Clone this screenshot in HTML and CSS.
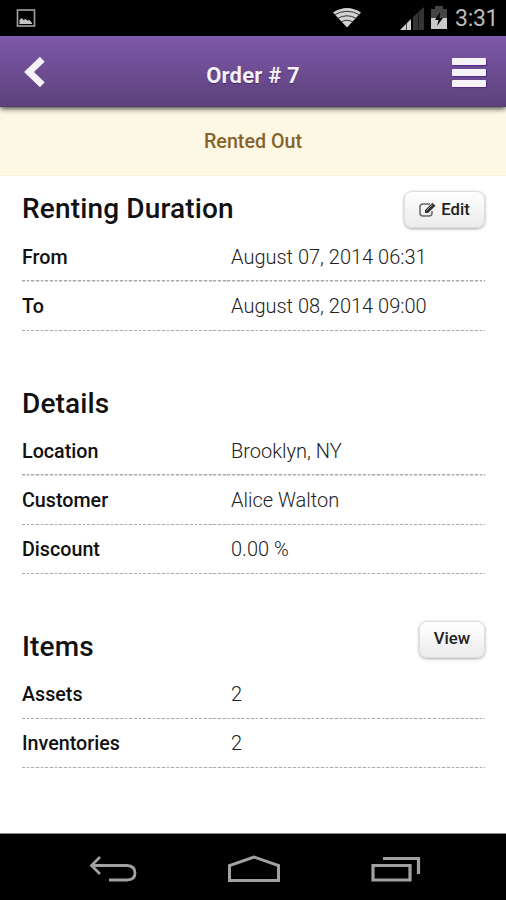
FILE: index.html
```html
<!DOCTYPE html>
<html lang="en">
<head>
<meta charset="utf-8">
<title>Order # 7</title>
<link rel="stylesheet" href="styles.css">
</head>
<body>
<div class="screen">
  <div class="status">
    <svg class="status-picture" width="20" height="20" viewBox="0 0 20 20"><rect x="1.500" y="2" width="17" height="16" fill="none" stroke="#999" stroke-width="1.700"/><path d="M3.500 16v-4l2-2 2 2 2-1 2 1.500 2-.5 2.500 3v1z" fill="#c4c4c4"/></svg>
    <div class="status-right">
      <svg class="wifi" width="28" height="22" viewBox="0 0 28 22"><path d="M0 4.500Q14-4.500 28 4.500L14 19.500z" fill="#d2d2d2"/><path d="M1 7Q14-.5 27 7M4.500 10.500Q14 5 23.500 10.500M8 14Q14 10.500 20 14" fill="none" stroke="#333" stroke-width="1"/></svg>
      <svg class="signal" width="25" height="24" viewBox="0 0 25 24"><path d="M0 23L11 12V23z" fill="#cfcfcf"/><path d="M13 23V10L24 0V23z" fill="#343434"/><path d="M6.500 12v11M18.500 2v21" stroke="#111" stroke-width=".7"/></svg>
      <svg class="battery" width="16" height="23" viewBox="0 0 16 23"><path d="M4 0h8v3h4v10H0V3h4z" fill="#444"/><path d="M0 12h16v11H0z" fill="#cacaca"/><path d="M9 6L4 14h3.500L6 20l6-8H8.500z" fill="#080808"/></svg>
      <span class="clock">3:31</span>
    </div>
  </div>
  <header class="bar">
    <svg class="back" width="22" height="32" viewBox="0 0 22 32"><path d="M18.300 3.200L5 16L18.300 28.800" fill="none" stroke="#f5f2f8" stroke-width="6.800"/></svg>
    <h1>Order # 7</h1>
    <div class="menu"><i></i><i></i><i></i></div>
  </header>
  <div class="alert">Rented Out</div>
  <main>
    <section>
      <div class="head"><h2>Renting Duration</h2><button class="edit"><svg width="18" height="16" viewBox="0 0 18 16"><path d="M11 2H4Q1 2 1 5v6q0 3 3 3h6q3 0 3-3V9" fill="none" stroke="#666" stroke-width="1.500"/><path d="M6 11V8L13.500.700l3 3L9 11z" fill="#333"/><path d="M7.500 8.500l6-6" stroke="#bbb" stroke-width=".8"/></svg><span>Edit</span></button></div>
      <dl>
        <div class="row"><dt>From</dt><dd>August 07, 2014 06:31</dd></div>
        <div class="row"><dt>To</dt><dd>August 08, 2014 09:00</dd></div>
      </dl>
    </section>
    <section>
      <div class="head"><h2>Details</h2></div>
      <dl>
        <div class="row"><dt>Location</dt><dd>Brooklyn, NY</dd></div>
        <div class="row"><dt>Customer</dt><dd>Alice Walton</dd></div>
        <div class="row"><dt>Discount</dt><dd>0.00 %</dd></div>
      </dl>
    </section>
    <section>
      <div class="head"><h2>Items</h2><button class="view"><span>View</span></button></div>
      <dl>
        <div class="row"><dt>Assets</dt><dd>2</dd></div>
        <div class="row"><dt>Inventories</dt><dd>2</dd></div>
      </dl>
    </section>
  </main>
  <nav>
    <svg width="48" height="28" viewBox="0 0 48 28"><path d="M11 2L2.500 10.500L11 19M2.500 10.500H38Q46 11 46 18T38 25H20" fill="none" stroke="#a3a0a1" stroke-width="2.800"/></svg>
    <svg width="52" height="28" viewBox="0 0 52 28"><path d="M1.500 25.500V10.500L26 2L50.500 10.500V25.500z" fill="none" stroke="#a3a0a1" stroke-width="3"/></svg>
    <svg width="50" height="28" viewBox="0 0 50 28"><path d="M2 10.500h37v14.500H2zM12 3.500H47.500V19" fill="none" stroke="#a3a0a1" stroke-width="3.200"/></svg>
  </nav>
</div>
</body>
</html>
```
FILE: styles.css
```css
* { box-sizing: border-box; }
body, h1, h2, dl, dd { margin: 0; }
body { font-family: Roboto, "Liberation Sans", sans-serif; background: #fff; color: #111; }
svg { display: block; flex: none; }
.screen { width: 506px; height: 900px; display: flex; flex-direction: column; overflow: hidden; }
.status { height: 36px; flex: none; background: #000; display: flex; justify-content: space-between; padding: 8px 9px 0 16px; }
.status-right { display: flex; }
.wifi { margin-right: 39px; }
.signal { margin: -1px 6px 0 0; }
.battery { margin: -2px 8px 0 0; }
.clock { color: #bcbcbc; font-size: 23px; line-height: 22px; width: 42px; white-space: nowrap; letter-spacing: -.3px; }
.bar { height: 71px; flex: none; display: flex; align-items: center; justify-content: space-between; padding: 1px 20px 0 24px; background: linear-gradient(#7e59aa, #5c417b); border-bottom: 1px solid #53416a; box-shadow: 0 1px 6px rgba(0, 0, 0, .9); position: relative; }
.bar h1 { color: #f5f2f8; font-size: 22px; line-height: 28px; font-weight: 700; padding: 8px 0 0 8px; letter-spacing: .2px; text-shadow: 0 1px 1px #46256a; }
.menu { display: flex; flex-direction: column; gap: 4.500px; width: 34px; padding-top: 2px; }
.menu i { height: 6.500px; background: #f6f3f8; border-radius: 1px; box-shadow: 1px 1px 1px #55258a; }
.alert { height: 69px; flex: none; background: #fcf8e3; border-bottom: 1px solid #fbeed5; color: #87632b; font-size: 19.700px; line-height: 69px; font-weight: 500; text-align: center; }
main { height: 657px; flex: none; padding: 0 21px 0 22px; }
.head { display: flex; justify-content: space-between; height: 56.500px; padding-top: 15px; }
section + section .head { height: 95.500px; padding-top: 54.500px; }
h2 { font-size: 28px; line-height: 36px; font-weight: 500; letter-spacing: .15px; white-space: nowrap; }
button { font: 500 16.700px/20px Roboto, sans-serif; color: #222; border: 1px solid #ddd; border-radius: 8px; background: linear-gradient(#fff, #ececec); box-shadow: 0 1px 3px rgba(0, 0, 0, .35); height: 37px; display: flex; align-items: center; justify-content: center; gap: 4px; padding: 0; }
.edit { width: 81px; }
.view { width: 66px; margin-top: -8px; }
.row { display: flex; height: 49.250px; font-size: 20px; line-height: 49px; background: repeating-linear-gradient(90deg, #aaa 0 2.700px, #eee 2.700px 4.670px) bottom / 100% 1.500px no-repeat; }
dt { width: 209px; font-weight: 500; font-size: 19.700px; }
dd { color: #222; white-space: nowrap; font-weight: 350; }
nav { height: 67px; flex: none; background: #000; border-top: 1px solid #888; display: flex; justify-content: space-between; padding: 21px 85px 0 89px; }
```
